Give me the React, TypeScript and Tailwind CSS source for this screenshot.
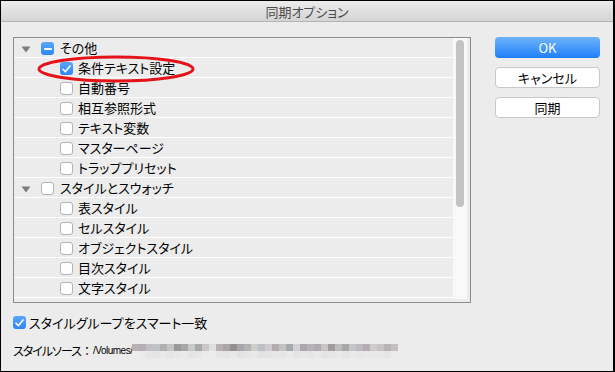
import React from "react";

const rows: { label: string; group?: boolean; checked?: boolean; mixed?: boolean }[] = [
  { label: "その他", group: true, mixed: true },
  { label: "条件テキスト設定", checked: true },
  { label: "自動番号" },
  { label: "相互参照形式" },
  { label: "テキスト変数" },
  { label: "マスターページ" },
  { label: "トラッププリセット" },
  { label: "スタイルとスウォッチ", group: true },
  { label: "表スタイル" },
  { label: "セルスタイル" },
  { label: "オブジェクトスタイル" },
  { label: "目次スタイル" },
  { label: "文字スタイル" },
];

const mosaicTop = [
  "#b9b1b5", "#b6aeb2", "#c3bfc1", "#bfc3c5", "#b0aeb0", "#c4c4c2", "#9c999b", "#a9a6a9",
  "#c9c9c7", "#a7a9ad", "#cbc7c9", "#e0dfe0", "#b7b0b2", "#aaa7a9", "#958f91", "#a6a7ab",
  "#b4b2b4", "#cecdcb", "#bcc1c5", "#cfcacc", "#b4adaf", "#c2c4c2", "#a9a8ad", "#d1d2d6",
  "#aea7aa", "#b5b3b6", "#adadb0", "#c6c6c8", "#a09b9c", "#bcbcbd", "#a7a6a9", "#c5c3c5",
  "#bcbabe", "#b6aeb2", "#cccccc", "#c8c4c6", "#b8b3b5", "#c0c0c2",
];
const mosaicBottom = [
  "#ededed", "#eaeaea", "#e6e6e6", "#e4e4e4", "#e9e9e9", "#e5e5e5", "#e8e8e8", "#eaeaea",
  "#e4e4e4", "#e6e6e6", "#ebebeb", "#ededed", "#e7e7e7", "#e5e5e5", "#e9e9e9", "#e3e3e3",
  "#e6e6e6", "#e8e8e8", "#e2e2e2", "#e4e4e4", "#e7e7e7", "#e6e6e6", "#e9e9e9", "#e4e4e4",
  "#e7e7e7", "#e5e5e5", "#e8e8e8", "#e3e3e3", "#e6e6e6", "#e8e8e8", "#e5e5e5", "#e9e9e9",
  "#e6e6e6", "#e8e8e8", "#e7e7e7", "#e9e9e9", "#e5e5e5", "#ebebeb",
];

function Check({ checked, mixed }: { checked?: boolean; mixed?: boolean }) {
  if (checked || mixed) {
    return (
      <span className="flex h-[13px] w-[13px] shrink-0 items-center justify-center rounded-[3px] bg-gradient-to-b from-[#5aa6fb] to-[#2a86f6]">
        {checked ? (
          <svg width="9" height="8" viewBox="0 0 9 8">
            <path d="M1 4.3 L3.4 6.8 L8 1" fill="none" stroke="white" strokeWidth="1.6" strokeLinecap="round" strokeLinejoin="round" />
          </svg>
        ) : (
          <span className="h-[2px] w-[8px] rounded-full bg-white" />
        )}
      </span>
    );
  }
  return <span className="block h-[13px] w-[13px] shrink-0 rounded-[3px] border border-[#b3b3b3] bg-white" />;
}

export default function App() {
  return (
    <div
      className="flex h-[372px] w-[615px] flex-col border border-r-2 border-black bg-[#ececec] text-black [font-feature-settings:'palt']"
      style={{ fontFamily: '"Noto Sans CJK JP", "Liberation Sans", sans-serif' }}
    >
      <div className="flex h-[21px] shrink-0 items-center justify-center border-b border-[#b4b4b4] bg-gradient-to-b from-[#ececec] to-[#d4d4d4] text-[13px] leading-none text-[#4b4b4b]">
        同期オプション
      </div>
      <div className="flex flex-1 pl-[12px] pr-[13px] pt-[15px]">
        <div className="flex w-[458px] flex-col">
          <div className="relative flex h-[266px] border border-[#8c8c8c] bg-[#ececec]">
            <div className="flex-1 overflow-hidden">
              {rows.map((r, i) => (
                <div
                  key={i}
                  className={`flex h-[20px] items-center border-b border-white text-[13px] leading-none ${r.group ? "pl-[7px]" : "pl-[46px]"}`}
                >
                  {r.group && (
                    <svg width="10" height="7" viewBox="0 0 10 7" className="mr-[10px] mt-[3px]">
                      <path d="M0.5 0.5 H9.5 L5 6.5 Z" fill="#7d7d7d" />
                    </svg>
                  )}
                  <span className="mt-[2px]">
                    <Check checked={r.checked} mixed={r.mixed} />
                  </span>
                  <span className={r.group ? "ml-[6px]" : "ml-[5px]"}>{r.label}</span>
                </div>
              ))}
            </div>
            <div className="mb-[3px] mr-[3px] w-[14px] bg-[#f9f9f9] pt-[2px]">
              <div className="mx-auto h-[167px] w-[8px] rounded-full bg-[#c3c3c3]" />
            </div>
            <svg className="absolute left-[23px] top-[17px]" width="158" height="28" viewBox="0 0 158 28">
              <ellipse cx="79" cy="14" rx="77" ry="12" fill="none" stroke="#e6121a" strokeWidth="3" />
            </svg>
          </div>
          <div className="mt-[13px] flex items-center gap-[3px] text-[13px] leading-none">
            <Check checked />
            <span>スタイルグループをスマート一致</span>
          </div>
          <div className="mt-[15px] flex items-center text-[12px] leading-none">
            <span className="tracking-[-1px]">スタイルソース</span>
            <span className="[font-feature-settings:normal]">：</span>
            <span className="text-[10px] tracking-[-0.5px]" style={{ fontFamily: '"Liberation Sans", sans-serif' }}>/Volumes/</span>
            <div className="flex flex-col">
              <div className="flex">
                {mosaicTop.map((c, i) => (
                  <span key={i} className="h-[7px] w-[7px]" style={{ backgroundColor: c }} />
                ))}
              </div>
              <div className="flex">
                {mosaicBottom.map((c, i) => (
                  <span key={i} className="h-[7px] w-[7px]" style={{ backgroundColor: c }} />
                ))}
              </div>
            </div>
          </div>
        </div>
        <div className="ml-auto flex w-[105px] flex-col gap-[9px] text-[13px]">
          <button className="h-[21px] rounded-[4px] bg-gradient-to-b from-[#6db3fb] to-[#1b7ff9] leading-none text-white">
            OK
          </button>
          <button className="h-[21px] rounded-[4px] border border-[#c8c8c8] bg-white leading-none">キャンセル</button>
          <button className="h-[21px] rounded-[4px] border border-[#c8c8c8] bg-white leading-none">同期</button>
        </div>
      </div>
    </div>
  );
}
